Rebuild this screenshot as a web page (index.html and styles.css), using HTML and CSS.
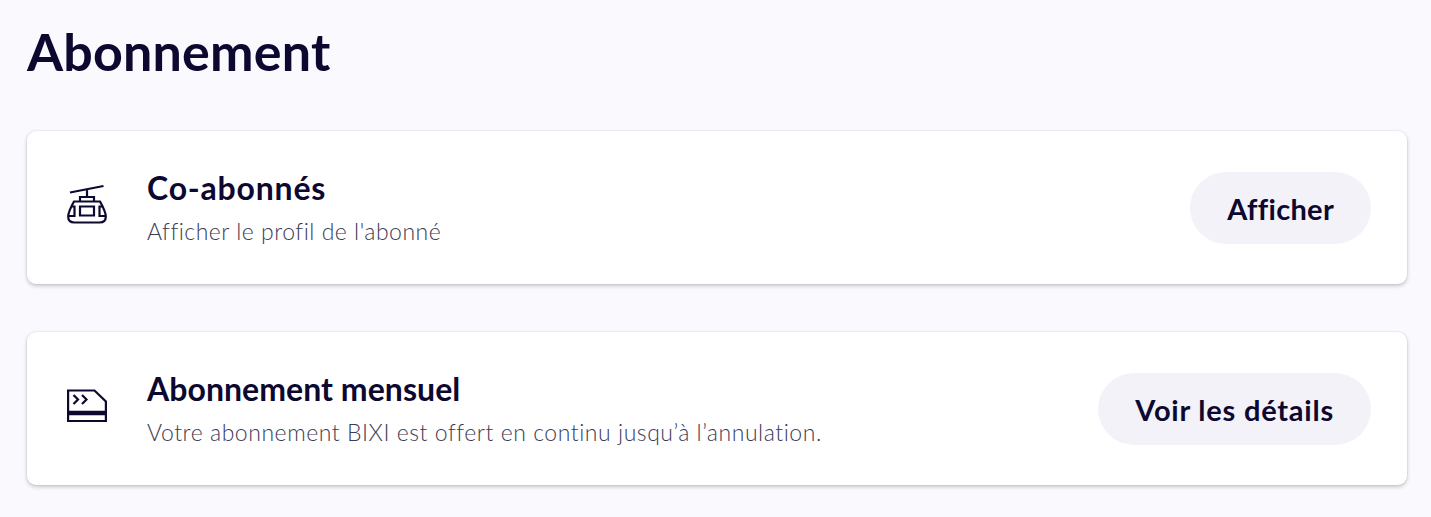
FILE: index.html
```html
<!DOCTYPE html>
<html lang="fr">
<head>
    <meta charset="UTF-8">
    <title>Abonnement</title>
    <link rel="stylesheet" href="styles.css">
</head>
<body>
    <h1>Abonnement</h1>

    <div class="card">
        <svg class="icon" viewBox="0 0 40 44" fill="none" stroke="#0c0830" stroke-width="2.2">
            <path d="M3 9.5L36.500 3M20 6.500V14M13 18V14H27V18"/>
            <path d="M7 18.500H33C35.500 23 38.800 29 38.800 33.500C38.800 37.500 36.500 39.500 32.500 39.500H7.500C3.500 39.500 1.200 37.500 1.200 33.500C1.200 29 4.500 23 7 18.500Z"/>
            <path d="M13 23.500H27V32.500H13ZM4 23.500H7.500V33H1.200M36 23.500H32.500V33H38.800"/>
        </svg>
        <div class="info">
            <h2 class="title title-members">Co-abonnés</h2>
            <p class="text text-members">Afficher le profil de l'abonné</p>
        </div>
        <button class="button button-show">Afficher</button>
    </div>

    <div class="card">
        <svg class="icon" viewBox="0 0 40 44" fill="none" stroke="#0c0830" stroke-width="2.2">
            <path d="M1.100 6.500H27.500L38.900 17.500V37H1.100Z"/>
            <path d="M1 29H39" stroke-width="4.500"/>
            <path d="M6.500 11L11 15.500L6.500 20M15 11L19.500 15.500L15 20"/>
        </svg>
        <div class="info">
            <h2 class="title title-monthly">Abonnement mensuel</h2>
            <p class="text text-monthly">Votre abonnement BIXI est offert en continu jusqu’à l’annulation.</p>
        </div>
        <button class="button button-details">Voir les détails</button>
    </div>
</body>
</html>
```

FILE: styles.css
```css
body {
    font-family: Lato, sans-serif;
    background-color: #f9f9fe;
    color: #0c0830;
    margin: 0;
    padding: 19px 24px 32px 27px;
}
h1 {
    font-size: 52px;
    font-weight: 700;
    line-height: 64px;
    letter-spacing: 0.2px;
    margin: 0 0 48px;
}
.card {
    display: flex;
    align-items: center;
    box-sizing: border-box;
    height: 153px;
    margin-bottom: 48px;
    padding: 0 36px 0 40px;
    background-color: #fff;
    border-radius: 9px;
    box-shadow: 0 2px 4px rgba(0,0,0,0.2), 0 0 2px rgba(0,0,0,0.12);
}
.card:last-child {
    margin-bottom: 0;
}
.icon {
    width: 40px;
    height: 44px;
    margin-right: 40px;
    margin-bottom: 5px;
}
.info {
    flex: 1;
}
.title {
    font-size: 32px;
    font-weight: 700;
    line-height: 38px;
    margin: 0 0 8px;
}
.title-members {
    letter-spacing: 0.8px;
}
.title-monthly {
    letter-spacing: 0.05px;
}
.text {
    color: #3c3b55;
    font-size: 23px;
    font-weight: 300;
    line-height: 32px;
    margin: 0;
}
.text-members {
    letter-spacing: 0.5px;
}
.text-monthly {
    letter-spacing: 0.54px;
}
.button {
    height: 72px;
    padding: 2px 37px 0 37px;
    border: none;
    border-radius: 36px;
    background-color: #f3f2f8;
    color: #0c0830;
    font-family: Lato, sans-serif;
    font-size: 29px;
    font-weight: 700;
    cursor: pointer;
}
.button-show {
    letter-spacing: 0.3px;
}
.button-details {
    letter-spacing: 0.78px;
}
```
